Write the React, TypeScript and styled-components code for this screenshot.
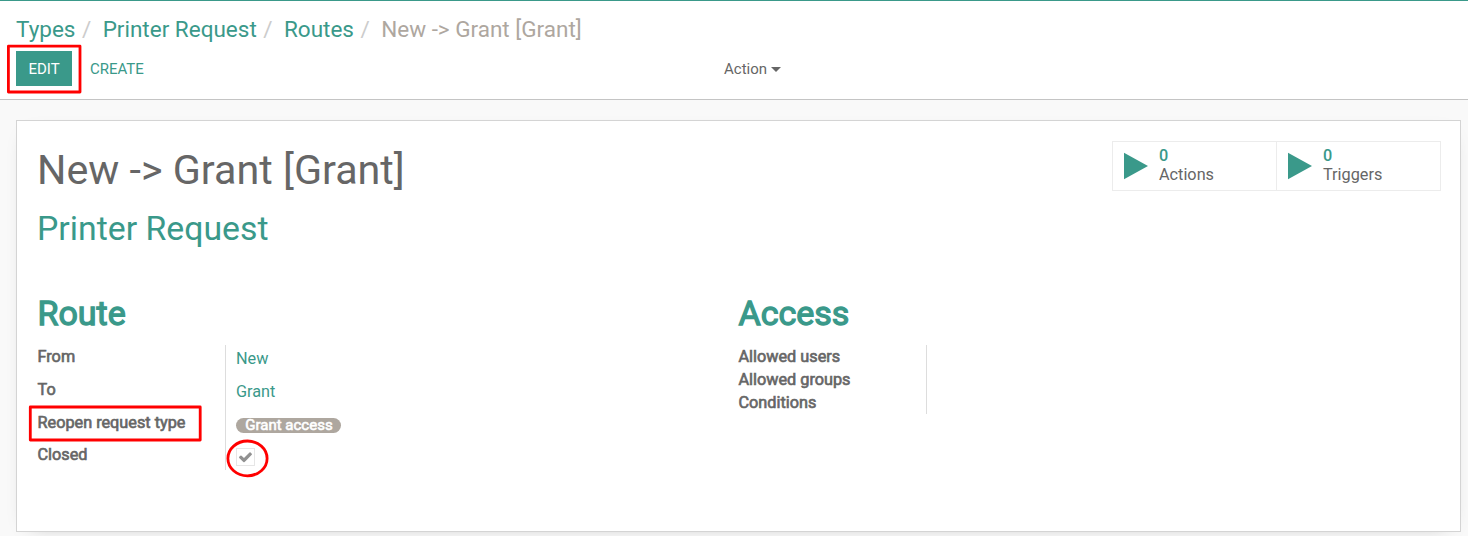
import React from "react";
import styled, { createGlobalStyle } from "styled-components";

const teal = "#3a998a";

const GlobalStyle = createGlobalStyle`
  * { box-sizing: border-box; }
  html, body { margin: 0; height: 100%; }
  body {
    background: #f9f9f9;
    color: #666666;
    font: 16.25px/23px Roboto, sans-serif;
    overflow: hidden;
  }
  a { color: ${teal}; text-decoration: none; }
`;

const Page = styled.div`
  display: flex;
  flex-direction: column;
  height: 536px;
`;

const ControlPanel = styled.header`
  height: 100px;
  padding: 0 16px;
  border-top: 1px solid ${teal};
  border-bottom: 1px solid #c4c4c4;
  background: #fff;
`;

const Breadcrumb = styled.nav`
  display: flex;
  height: 50px;
  padding-top: 12px;
  font-size: 22.5px;
  line-height: 33px;
  white-space: pre;
`;

const Separator = styled.span`
  width: 27.2px;
  padding-left: 6.5px;
  color: #cccccc;
`;

const Current = styled.span`
  color: #aea79f;
`;

const Toolbar = styled.div`
  display: grid;
  grid-template-columns: 708px auto;
`;

const ButtonGroup = styled.div`
  display: flex;
`;

const Button = styled.button<{ $primary?: boolean }>`
  display: block;
  height: 35px;
  width: ${(p) => (p.$primary ? "56px" : "90px")};
  padding: 0 0 0 ${(p) => (p.$primary ? "12.5px" : "18px")};
  border: 0;
  background: ${(p) => (p.$primary ? teal : "transparent")};
  color: ${(p) => (p.$primary ? "#fff" : teal)};
  font: 15px/37px Roboto, sans-serif;
  text-align: left;
  text-transform: uppercase;
`;

const Dropdown = styled.div`
  display: flex;
  align-items: center;
  gap: 4px;
  height: 37px;
  font-size: 15px;
`;

const Caret = styled.span`
  border: 5px solid transparent;
  border-top-color: #666;
  border-bottom: 0;
`;

const Sheet = styled.main`
  height: 412px;
  margin: 20px 7px 0 16px;
  padding: 20px 19px 20px 20px;
  border: 1px solid #d4d4d4;
  background: #fff;
  box-shadow: 0 5px 20px -15px rgba(0, 0, 0, 0.4);
`;

const SheetTop = styled.div`
  display: flex;
  justify-content: space-between;
  height: 144px;
`;

const Title = styled.h1`
  margin: 5px 0 0;
  font-size: 41.25px;
  font-weight: 400;
  line-height: 48px;
`;

const Subtitle = styled.h2`
  margin: 15px 0 0;
  font-size: 33.8px;
  font-weight: 400;
  line-height: 40px;
`;

const Stats = styled.div`
  display: flex;
  width: 329px;
  height: 50px;
  border: 1px solid #ececec;
`;

const Stat = styled.div`
  display: flex;
  width: 163px;
  padding: 4px 0 0 11px;
  & + & { width: 164px; border-left: 1px solid #ececec; }
`;

const StatIcon = styled.svg`
  width: 24px;
  height: 28px;
  margin: 6px 11px 0 0;
  fill: ${teal};
`;

const StatText = styled.div`
  display: flex;
  flex-direction: column;
  line-height: 19px;
`;

const StatValue = styled.span`
  color: ${teal};
  font-weight: 500;
`;

const Groups = styled.div`
  display: grid;
  grid-template-columns: 701px 1fr;
`;

const GroupTitle = styled.h3`
  margin: 7px 0 0 0.5px;
  height: 53px;
  color: ${teal};
  font-size: 34px;
  font-weight: 400;
  line-height: 42px;
  -webkit-text-stroke: 1.3px ${teal};
`;

const Field = styled.div<{ $height: number }>`
  display: flex;
  height: ${(p) => p.$height}px;
`;

const Label = styled.div`
  width: 188px;
  padding-left: 0.5px;
  -webkit-text-stroke: 0.65px #666;
`;

const Value = styled.div`
  flex: 1;
  padding: 2px 0 0 10px;
  border-left: 1px solid #ddd;
`;

const Tag = styled.span`
  display: block;
  width: 105px;
  height: 15px;
  margin-top: 5px;
  padding-left: 9.25px;
  border-radius: 8px;
  background: #aea79f;
  color: #fff;
  font-size: 15px;
  line-height: 15px;
  -webkit-text-stroke: 0.6px #fff;
`;

const Checkbox = styled.div`
  display: flex;
  align-items: center;
  justify-content: center;
  width: 19px;
  height: 18px;
  margin-top: 3px;
  border: 1px solid #e6e6e6;
`;

const CheckIcon = styled.svg`
  width: 15px;
  height: 15px;
  flex: none;
  fill: #919191;
`;

const Anchor = styled.div`
  position: relative;
  width: fit-content;
`;

const Highlight = styled.svg<{ $x: number; $y: number }>`
  position: absolute;
  left: ${(p) => p.$x}px;
  top: ${(p) => p.$y}px;
  overflow: visible;
  fill: none;
  stroke: #ff0000;
  stroke-width: 2.8px;
  stroke-linejoin: round;
  pointer-events: none;
`;

function StatButton({ label }: { label: string }) {
  return (
    <Stat>
      <StatIcon viewBox="0 0 24 28">
        <path d="M0 .8v26.4L24 14z" />
      </StatIcon>
      <StatText>
        <StatValue>0</StatValue>
        <span>{label}</span>
      </StatText>
    </Stat>
  );
}

export default function App() {
  return (
    <Page>
      <GlobalStyle />
      <ControlPanel>
        <Breadcrumb>
          <a>Types</a>
          <Separator>/</Separator>
          <a>Printer Request</a>
          <Separator>/</Separator>
          <a>Routes</a>
          <Separator>/</Separator>
          <Current>{"New -> Grant [Grant]"}</Current>
        </Breadcrumb>
        <Toolbar>
          <ButtonGroup>
            <Anchor>
              <Button $primary>Edit</Button>
              <Highlight $x={-10} $y={-7} width="76" height="50">
                <rect x="2.4" y="2.2" width="71.6" height="45.8" />
              </Highlight>
            </Anchor>
            <Button>Create</Button>
          </ButtonGroup>
          <Dropdown>
            Action
            <Caret />
          </Dropdown>
        </Toolbar>
      </ControlPanel>
      <Sheet>
        <SheetTop>
          <div>
            <Title>{"New -> Grant [Grant]"}</Title>
            <Subtitle>
              <a>Printer Request</a>
            </Subtitle>
          </div>
          <Stats>
            <StatButton label="Actions" />
            <StatButton label="Triggers" />
          </Stats>
        </SheetTop>
        <Groups>
          <section>
            <GroupTitle>Route</GroupTitle>
            <Field $height={33}>
              <Label>From</Label>
              <Value>
                <a>New</a>
              </Value>
            </Field>
            <Field $height={33}>
              <Label>To</Label>
              <Value>
                <a>Grant</a>
              </Value>
            </Field>
            <Field $height={32}>
              <Label>
                <Anchor>
                  Reopen request type
                  <Highlight $x={-9.5} $y={-6} width="174" height="37">
                    <rect x="2.3" y="2" width="169.9" height="33" />
                  </Highlight>
                </Anchor>
              </Label>
              <Value>
                <Tag>Grant access</Tag>
              </Value>
            </Field>
            <Field $height={27}>
              <Label>Closed</Label>
              <Value>
                <Anchor>
                  <Checkbox>
                    <CheckIcon viewBox="0 52 1792 1792">
                      <path d="M1671 566q0 40-28 68l-724 724-136 136q-28 28-68 28t-68-28l-136-136-362-362q-28-28-28-68t28-68l136-136q28-28 68-28t68 28l294 295 656-657q28-28 68-28t68 28l136 136q28 28 28 68z" />
                    </CheckIcon>
                  </Checkbox>
                  <Highlight $x={-10} $y={-9} width="43" height="39">
                    <ellipse cx="21.5" cy="19.4" rx="19.6" ry="17.4" />
                  </Highlight>
                </Anchor>
              </Value>
            </Field>
          </section>
          <section>
            <GroupTitle>Access</GroupTitle>
            <Field $height={23}>
              <Label>Allowed users</Label>
              <Value />
            </Field>
            <Field $height={23}>
              <Label>Allowed groups</Label>
              <Value />
            </Field>
            <Field $height={23}>
              <Label>Conditions</Label>
              <Value />
            </Field>
          </section>
        </Groups>
      </Sheet>
    </Page>
  );
}
